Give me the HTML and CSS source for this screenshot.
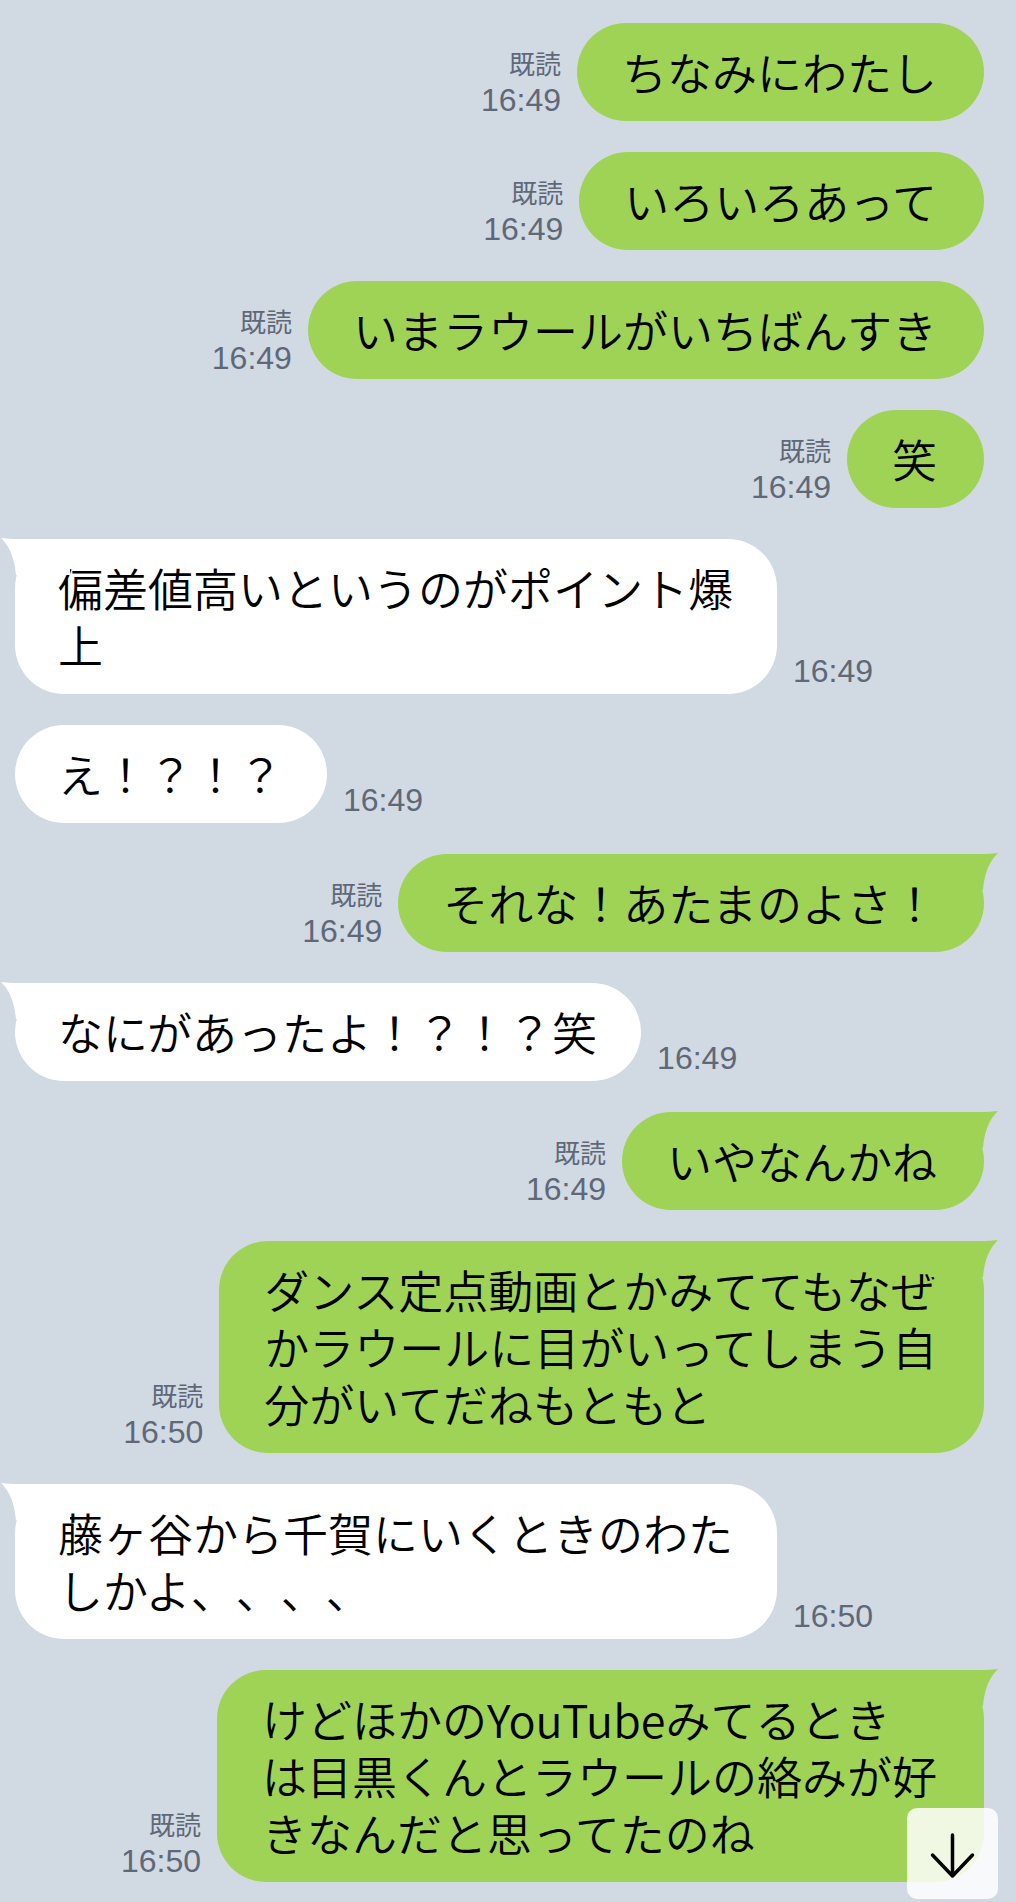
FILE: index.html
```html
<!DOCTYPE html>
<html lang="ja">
<head>
<meta charset="utf-8">
<title>Chat</title>
<link rel="stylesheet" href="styles.css">
</head>
<body>
<div class="chat">
  <div class="row out">
    <div class="meta"><span class="read">既読</span><span class="time">16:49</span></div>
    <div class="bubble">ちなみにわたし</div>
  </div>
  <div class="row out">
    <div class="meta"><span class="read">既読</span><span class="time">16:49</span></div>
    <div class="bubble">いろいろあって</div>
  </div>
  <div class="row out">
    <div class="meta"><span class="read">既読</span><span class="time">16:49</span></div>
    <div class="bubble">いまラウールがいちばんすき</div>
  </div>
  <div class="row out">
    <div class="meta"><span class="read">既読</span><span class="time">16:49</span></div>
    <div class="bubble">笑</div>
  </div>
  <div class="row in">
    <div class="bubble"><svg class="tail" viewBox="0 0 70 46"><path d="M70,2 L20,2 C10,2 5,1.5 1,1 C7,7 14,16 16,38 L70,38 Z"/></svg>偏差値高いというのがポイント爆<br>上</div>
    <div class="meta"><span class="time">16:49</span></div>
  </div>
  <div class="row in">
    <div class="bubble">え！？！？</div>
    <div class="meta"><span class="time">16:49</span></div>
  </div>
  <div class="row out">
    <div class="meta"><span class="read">既読</span><span class="time">16:49</span></div>
    <div class="bubble"><svg class="tail" viewBox="0 0 70 46"><path d="M0,2 L50,2 C60,2 65,1.5 69,1 C63,7 56,16 54,38 L0,38 Z"/></svg>それな！あたまのよさ！</div>
  </div>
  <div class="row in">
    <div class="bubble"><svg class="tail" viewBox="0 0 70 46"><path d="M70,2 L20,2 C10,2 5,1.5 1,1 C7,7 14,16 16,38 L70,38 Z"/></svg>なにがあったよ！？！？笑</div>
    <div class="meta"><span class="time">16:49</span></div>
  </div>
  <div class="row out">
    <div class="meta"><span class="read">既読</span><span class="time">16:49</span></div>
    <div class="bubble"><svg class="tail" viewBox="0 0 70 46"><path d="M0,2 L50,2 C60,2 65,1.5 69,1 C63,7 56,16 54,38 L0,38 Z"/></svg>いやなんかね</div>
  </div>
  <div class="row out">
    <div class="meta"><span class="read">既読</span><span class="time">16:50</span></div>
    <div class="bubble"><svg class="tail" viewBox="0 0 70 46"><path d="M0,2 L50,2 C60,2 65,1.5 69,1 C63,7 56,16 54,38 L0,38 Z"/></svg>ダンス定点動画とかみててもなぜ<br>かラウールに目がいってしまう自<br>分がいてだねもともと</div>
  </div>
  <div class="row in">
    <div class="bubble"><svg class="tail" viewBox="0 0 70 46"><path d="M70,2 L20,2 C10,2 5,1.5 1,1 C7,7 14,16 16,38 L70,38 Z"/></svg>藤ヶ谷から千賀にいくときのわた<br>しかよ、、、、</div>
    <div class="meta"><span class="time">16:50</span></div>
  </div>
  <div class="row out">
    <div class="meta"><span class="read">既読</span><span class="time">16:50</span></div>
    <div class="bubble"><svg class="tail" viewBox="0 0 70 46"><path d="M0,2 L50,2 C60,2 65,1.5 69,1 C63,7 56,16 54,38 L0,38 Z"/></svg>けどほかのYouTubeみてるとき<br>は目黒くんとラウールの絡みが好<br>きなんだと思ってたのね</div>
  </div>
</div>
<button class="scroll-down" type="button" aria-label="最新のメッセージへ">
  <svg viewBox="0 0 91 91"><path d="M45.5,27 L45.5,68 M25.5,47 L45.5,68 L65.5,47"/></svg>
</button>
</body>
</html>
```

FILE: styles.css
```css
html, body {
  margin: 0;
  padding: 0;
}

body {
  background: #d1d9e3;
  font-family: "Noto Sans CJK JP", "Noto Sans", sans-serif;
  height: 1902px;
  overflow: hidden;
}

.chat {
  display: flex;
  flex-direction: column;
  gap: 31px;
  padding: 23px 32px 0 15px;
}

.row {
  display: flex;
  align-items: flex-end;
}

.row.out {
  justify-content: flex-end;
}

.bubble {
  position: relative;
  font-size: 45px;
  font-weight: 350;
  line-height: 57px;
  padding: 20px 44px 21px 45px;
  border-radius: 49px;
  color: #000;
  white-space: nowrap;
  text-spacing-trim: space-all;
}

.out .bubble {
  background: #9fd355;
  padding-right: 47px;
}

.in .bubble {
  background: #ffffff;
  padding-left: 43px;
}

.tail {
  position: absolute;
  top: -2px;
  width: 70px;
  height: 46px;
}

.out .tail {
  right: -15px;
  fill: #9fd355;
}

.in .tail {
  left: -15px;
  fill: #ffffff;
}

.meta {
  display: flex;
  flex-direction: column;
  align-items: flex-end;
  color: #5e6878;
}

.out .meta {
  margin-right: 16px;
  padding-bottom: 4px;
}

.in .meta {
  margin-left: 16px;
  padding-bottom: 6px;
}

.read {
  font-size: 26px;
  line-height: 36px;
  margin-bottom: 2px;
}

.time {
  font-family: "Liberation Sans", Arial, sans-serif;
  font-size: 32px;
  line-height: 34px;
}

.scroll-down {
  position: fixed;
  right: 18px;
  bottom: 3px;
  width: 91px;
  height: 91px;
  padding: 0;
  border: none;
  border-radius: 10px;
  background: rgba(255, 255, 255, 0.84);
}

.scroll-down svg {
  display: block;
  width: 91px;
  height: 91px;
  fill: none;
  stroke: #000;
  stroke-width: 3.5;
  stroke-linecap: round;
  stroke-linejoin: round;
}
```
